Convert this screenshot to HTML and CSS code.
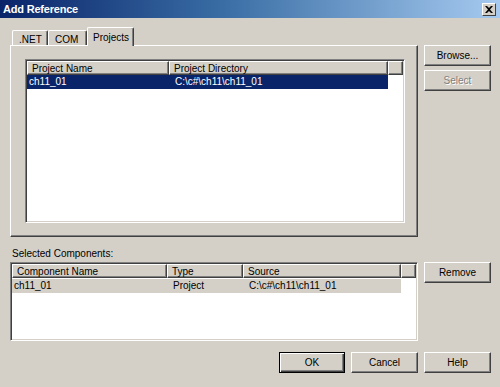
FILE: index.html
```html
<!DOCTYPE html>
<html lang="en">
<head>
    <meta charset="UTF-8">
    <title>Add Reference</title>
    <link rel="stylesheet" href="styles.css">
</head>
<body>
    <div class="dialog">
        <div class="titlebar">
            <span class="title">Add Reference</span>
            <span class="close">
                <svg width="8" height="7" viewBox="0 0 8 7"><path d="M0 0h2l2 2 2-2h2L5 3.5 8 7H6L4 5 2 7H0l3-3.5z" fill="#000"/></svg>
            </span>
        </div>

        <div class="upper">
            <div class="tabs">
                <div class="tabstrip">
                    <div class="tab tab-net">.NET</div>
                    <div class="tab tab-com">COM</div>
                    <div class="tab tab-projects active">Projects</div>
                </div>
                <div class="tabpanel">
                    <div class="listview projects">
                        <div class="lv-head">
                            <div class="hcell" style="width:142px">Project Name</div>
                            <div class="hcell" style="width:219px">Project Directory</div>
                            <div class="hcell filler"></div>
                        </div>
                        <div class="lv-row selected">
                            <div class="cell first" style="width:142px">ch11_01</div>
                            <div class="cell" style="width:219px">C:\c#\ch11\ch11_01</div>
                        </div>
                    </div>
                </div>
            </div>
            <div class="side">
                <button class="btn">Browse...</button>
                <button class="btn" disabled>Select</button>
            </div>
        </div>

        <div class="label">Selected Components:</div>

        <div class="lower">
            <div class="listview components">
                <div class="lv-head">
                    <div class="hcell" style="width:155px">Component Name</div>
                    <div class="hcell" style="width:76px">Type</div>
                    <div class="hcell" style="width:158px">Source</div>
                    <div class="hcell filler"></div>
                </div>
                <div class="lv-row inactive">
                    <div class="cell first" style="width:155px">ch11_01</div>
                    <div class="cell" style="width:76px">Project</div>
                    <div class="cell" style="width:158px">C:\c#\ch11\ch11_01</div>
                </div>
            </div>
            <div class="side">
                <button class="btn">Remove</button>
            </div>
        </div>

        <div class="footer">
            <button class="btn default">OK</button>
            <button class="btn">Cancel</button>
            <button class="btn">Help</button>
        </div>
    </div>
</body>
</html>
```

FILE: styles.css
```css
/* Classic Windows dialog */
body {
    margin: 0;
    background-color: #d4d0c8;
    font-family: "Liberation Sans", Arial, sans-serif;
    font-size: 10px;
    color: #000;
}
.dialog {
    width: 500px;
    height: 387px;
    overflow: hidden;
    background-color: #d4d0c8;
}

/* title bar */
.titlebar {
    height: 18px;
    display: flex;
    align-items: center;
    justify-content: space-between;
    padding: 0 4px 0 3px;
    background: linear-gradient(to right, #0a246a, #3a6ea5 45%, #a6caf0);
    box-sizing: border-box;
}
.title {
    color: #fff;
    font-weight: bold;
    font-size: 11px;
    letter-spacing: -0.2px;
}
.close {
    width: 14px;
    height: 13px;
    box-sizing: border-box;
    display: flex;
    align-items: center;
    justify-content: center;
    background-color: #d4d0c8;
    border-top: 1px solid #fff;
    border-left: 1px solid #fff;
    border-right: 1px solid #404040;
    border-bottom: 1px solid #404040;
}

/* tabs */
.upper {
    display: flex;
    margin-top: 9px;
    height: 210px;
}
.tabs {
    margin-left: 10px;
    width: 408px;
}
.tabstrip {
    height: 18px;
    display: flex;
    align-items: flex-end;
    padding-left: 2px;
}
.tab {
    height: 15px;
    box-sizing: border-box;
    border-top: 1px solid #fff;
    border-left: 1px solid #fff;
    border-right: 1px solid #404040;
    box-shadow: inset -1px 0 #808080;
    border-radius: 2px 2px 0 0;
    padding: 3px 0 0 6px;
}
.tab-net { width: 36px; }
.tab-com { width: 39px; }
.tab-projects { width: 47px; }
.tab.active {
    height: 19px;
    margin-bottom: -1px;
    position: relative;
    z-index: 1;
    background-color: #d4d0c8;
    padding-top: 4px;
    padding-left: 5px;
}
.tabpanel {
    height: 192px;
    box-sizing: border-box;
    border-top: 1px solid #fff;
    border-left: 1px solid #fff;
    border-right: 1px solid #404040;
    border-bottom: 1px solid #404040;
    box-shadow: inset -1px -1px #808080;
    padding: 13px 0 0 14px;
}

/* list views */
.listview {
    box-sizing: border-box;
    background-color: #fff;
    border-top: 1px solid #808080;
    border-left: 1px solid #808080;
    border-right: 1px solid #fff;
    border-bottom: 1px solid #fff;
    box-shadow: inset 1px 1px #404040, inset -1px -1px #d4d0c8;
    padding: 1px;
}
.listview.projects {
    width: 380px;
    height: 164px;
}
.listview.components {
    width: 408px;
    height: 79px;
}
.lv-head {
    display: flex;
    height: 14px;
}
.hcell {
    box-sizing: border-box;
    height: 14px;
    background-color: #d4d0c8;
    border-top: 1px solid #fff;
    border-left: 1px solid #fff;
    border-right: 1px solid #404040;
    border-bottom: 1px solid #404040;
    box-shadow: inset -1px -1px #808080;
    padding: 1px 0 0 4px;
    white-space: nowrap;
    overflow: hidden;
}
.hcell.filler {
    flex: 1;
}
.lv-row {
    display: flex;
    height: 14px;
    width: max-content;
}
.lv-row.selected {
    background-color: #0a246a;
    color: #fff;
}
.lv-row.inactive {
    background-color: #d4d0c8;
    margin-top: 1px;
}
.cell {
    box-sizing: border-box;
    padding: 1px 0 0 6px;
    white-space: nowrap;
}
.cell.first {
    padding-left: 2px;
}

/* buttons */
.side {
    display: flex;
    flex-direction: column;
    gap: 4px;
    margin-left: 6px;
    padding-top: 18px;
}
.lower .side {
    padding-top: 0;
}
.btn {
    width: 67px;
    height: 21px;
    box-sizing: border-box;
    padding: 0;
    font-family: inherit;
    font-size: 10px;
    color: #000;
    background-color: #d4d0c8;
    border-top: 1px solid #fff;
    border-left: 1px solid #fff;
    border-right: 1px solid #404040;
    border-bottom: 1px solid #404040;
    box-shadow: inset -1px -1px #808080;
    border-radius: 0;
}
.btn:disabled {
    color: #808080;
    text-shadow: 1px 1px #fff;
}
.btn.default {
    border: 1px solid #000;
    box-shadow: inset 1px 1px #fff, inset -1px -1px #404040, inset -2px -2px #808080;
    width: 66px;
}

.label {
    margin: 11px 0 0 12px;
    height: 14px;
}

.lower {
    display: flex;
    padding-left: 10px;
}

.footer {
    display: flex;
    justify-content: flex-end;
    gap: 6px;
    padding-right: 9px;
    margin-top: 11px;
}
```
